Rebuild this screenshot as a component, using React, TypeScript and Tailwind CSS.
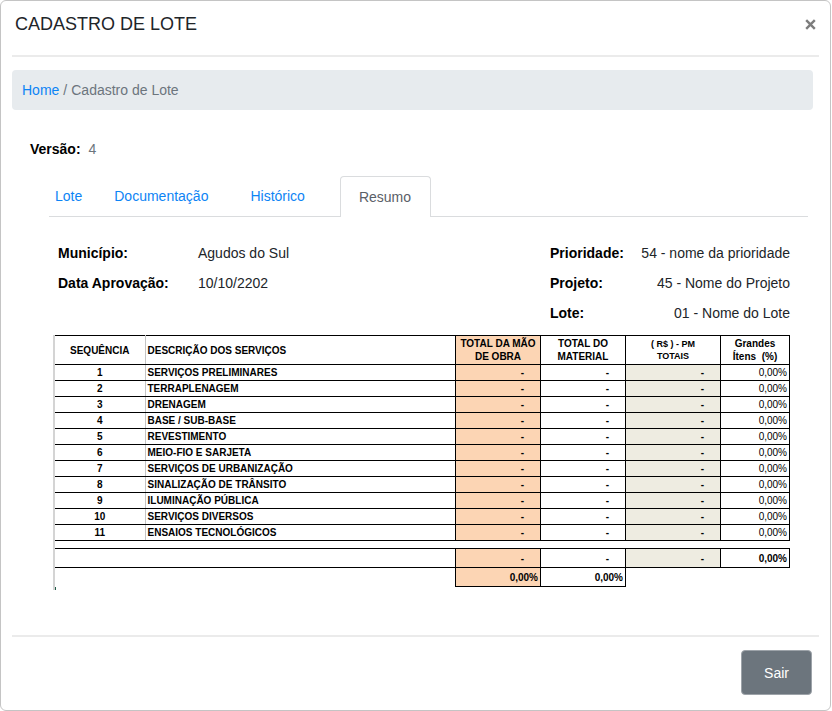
import React from "react";

const services = [
  "SERVIÇOS PRELIMINARES",
  "TERRAPLENAGEM",
  "DRENAGEM",
  "BASE / SUB-BASE",
  "REVESTIMENTO",
  "MEIO-FIO E SARJETA",
  "SERVIÇOS DE URBANIZAÇÃO",
  "SINALIZAÇÃO DE TRÂNSITO",
  "ILUMINAÇÃO PÚBLICA",
  "SERVIÇOS DIVERSOS",
  "ENSAIOS TECNOLÓGICOS",
];

const labour = "border border-black bg-[#fcd5b4]";
const material = "border border-black";
const totals = "border border-black bg-[#eeece1]";

function Field({ label, value }: { label: string; value: string }) {
  return (
    <div className="flex h-[30px] items-center">
      <dt className="w-[140px] font-bold text-black">{label}</dt>
      <dd>{value}</dd>
    </div>
  );
}

function SideField({ label, value }: { label: string; value: string }) {
  return (
    <div className="flex h-[30px] items-center justify-between">
      <dt className="font-bold text-black">{label}</dt>
      <dd>{value}</dd>
    </div>
  );
}

function SummaryTable() {
  return (
    <div className="border-l-2 border-[#d4d4d4]">
      <table className="w-full table-fixed border-collapse text-[10px] leading-[13px] font-bold text-black">
        <colgroup>
          <col className="w-[90px]" />
          <col />
          <col className="w-[85px]" />
          <col className="w-[85px]" />
          <col className="w-[95px]" />
          <col className="w-[69px]" />
        </colgroup>
        <thead>
          <tr className="h-[29px]">
            <th scope="col" className="border-y border-r border-black border-r-[#c4c4c4]">SEQUÊNCIA</th>
            <th scope="col" className="border-y border-black pl-[2px] text-left">DESCRIÇÃO DOS SERVIÇOS</th>
            <th scope="col" className={labour}>TOTAL DA MÃO<br />DE OBRA</th>
            <th scope="col" className={material}>TOTAL DO<br />MATERIAL</th>
            <th scope="col" className="border border-black text-[9px] leading-[12px]">( R$ ) - PM<br />TOTAIS</th>
            <th scope="col" className="border border-black">Grandes<br />Ítens&nbsp; (%)</th>
          </tr>
        </thead>
        <tbody>
          {services.map((name, i) => (
            <tr key={name} className="h-4">
              <td className="border-y border-r border-black border-r-[#c4c4c4] text-center">{i + 1}</td>
              <td className="border-y border-black pl-[2px]">{name}</td>
              <td className={labour + " pr-4 text-right"}>-</td>
              <td className={material + " pr-4 text-right"}>-</td>
              <td className={totals + " pr-4 text-right"}>-</td>
              <td className="border border-black pr-[2px] text-right font-normal">0,00%</td>
            </tr>
          ))}
          <tr className="h-2">
            <td colSpan={6} className="border-y border-black" />
          </tr>
          <tr className="h-[19px]">
            <td colSpan={2} className="border-y border-black" />
            <td className={labour + " pr-4 text-right"}>-</td>
            <td className={material + " pr-4 text-right"}>-</td>
            <td className={totals + " pr-4 text-right"}>-</td>
            <td className="border border-black pr-[2px] text-right">0,00%</td>
          </tr>
          <tr className="h-[19px]">
            <td colSpan={2} />
            <td className={labour + " pr-[2px] text-right"}>0,00%</td>
            <td className={material + " pr-[2px] text-right"}>0,00%</td>
            <td colSpan={2} />
          </tr>
        </tbody>
      </table>
      <div className="h-[3px] w-px bg-[#1f5c46]" />
    </div>
  );
}

export default function App() {
  return (
    <div className="mr-px flex min-h-screen flex-col rounded-md border border-[#c4c4c4] bg-white px-[11px] font-['Liberation_Sans',Arial,sans-serif] text-sm text-[#212529]">
      <header className="flex h-14 items-center justify-between border-b-2 border-[#ebebeb] pr-[3px] pb-2 pl-[3px]">
        <h1 className="text-lg">CADASTRO DE LOTE</h1>
        <button type="button" aria-label="Fechar" className="text-[#7d7d7d]">
          <svg width="11" height="11" viewBox="0 0 11 11" stroke="currentColor" strokeWidth="2.4" fill="none">
            <path d="M1.2 1.2 9.8 9.8M9.8 1.2 1.2 9.8" />
          </svg>
        </button>
      </header>

      <nav aria-label="Trilha" className="mt-[13px] mr-1.5 flex h-10 items-center gap-1 rounded-[4px] bg-[#e7ebee] px-2.5 text-[#6c757d]">
        <a href="#" className="text-[#0d84f5]">Home</a>
        <span>/</span>
        <span>Cadastro de Lote</span>
      </nav>

      <main className="flex-1">
        <p className="mt-7 ml-[18px] flex h-[22px] items-center gap-2">
          <span className="font-bold text-black">Versão:</span>
          <span className="text-[#6c757d]">4</span>
        </p>

        <nav aria-label="Abas" className="mt-4 mr-[11px] ml-[37px] flex h-[41px] border-b border-[#dadcde] text-[#0d84f5]">
          <a href="#" className="flex items-center pr-8 pl-1.5">Lote</a>
          <a href="#" className="flex items-center pr-[42px]">Documentação</a>
          <a href="#" className="flex items-center pr-[35px]">Histórico</a>
          <a href="#" aria-current="page" className="-mb-px flex w-[91px] items-center rounded-t-[4px] border border-b-0 border-[#dadcde] bg-white px-[18px] text-[#5a6067]">Resumo</a>
        </nav>

        <section className="mt-[21px] mr-[29px] ml-[41px]">
          <div className="flex justify-between pl-[5px]">
            <dl>
              <Field label="Município:" value="Agudos do Sul" />
              <Field label="Data Aprovação:" value="10/10/2202" />
            </dl>
            <dl className="w-60">
              <SideField label="Prioridade:" value="54 - nome da prioridade" />
              <SideField label="Projeto:" value="45 - Nome do Projeto" />
              <SideField label="Lote:" value="01 - Nome do Lote" />
            </dl>
          </div>
          <div className="mt-[7px]">
            <SummaryTable />
          </div>
        </section>
      </main>

      <footer className="flex h-[75px] justify-end border-t-2 border-[#ebebeb] pt-[13px] pr-[7px]">
        <button type="button" className="h-[45px] w-[71px] rounded-[4px] border border-[#9da3a9] bg-[#6c757d] text-white">Sair</button>
      </footer>
    </div>
  );
}
